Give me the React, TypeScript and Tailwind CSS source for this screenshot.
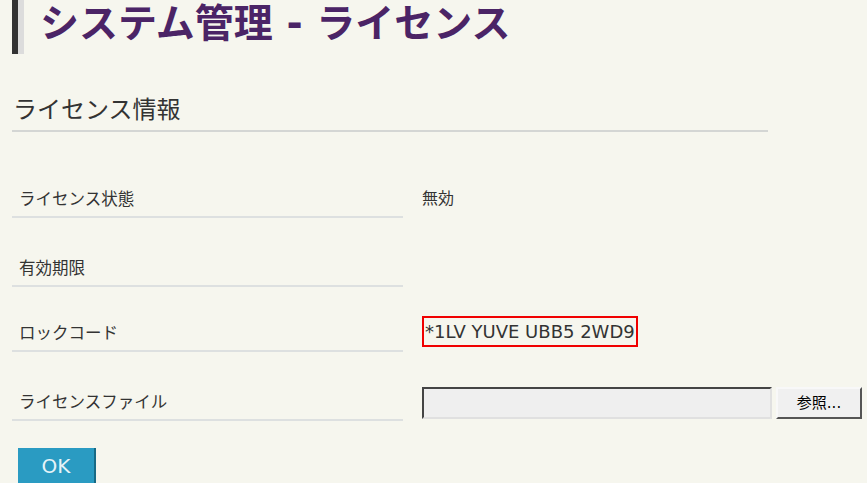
const font = { fontFamily: '"DejaVu Sans", "Noto Sans CJK JP", sans-serif' };

const Row = ({ label, h, children }: any) => (
  <div className={`flex items-end ${h}`}>
    <div className="w-[391px] border-b-2 border-[#dde0e0] pl-[7px] pb-[4px] text-[16.5px] leading-[24px] text-[#333]">
      {label}
    </div>
    <div className="ml-[19px] flex items-end">{children}</div>
  </div>
);

export default function App() {
  return (
    <div className="w-[867px] h-[483px] overflow-hidden bg-[#f6f6ee]" style={font}>
      <div className="flex pl-[12px]">
        <div className="w-[6px] h-[54px] bg-[#333]" />
        <div className="w-[6px] h-[54px] bg-[#dcdcdc]" />
        <div className="ml-[16px] text-[39px] leading-[48px] font-bold text-[#4b2466]">
          システム管理 - ライセンス
        </div>
      </div>

      <div className="mx-[12px] w-[756px] mt-[39px] border-b-2 border-[#d4d6d4] pb-[3px] pl-[1px] text-[24px] leading-[34px] text-[#333]">
        ライセンス情報
      </div>

      <div className="ml-[12px]">
        <Row label="ライセンス状態" h="h-[86px]">
          <div className="pb-[7px] text-[16px] leading-[24px] text-[#333]">無効</div>
        </Row>
        <Row label="有効期限" h="h-[69px]" />
        <Row label="ロックコード" h="h-[65px]">
          <div className="mb-[5px] w-[216px] h-[31px] border-2 border-[#f00000] pl-[1px] text-[18px] leading-[27px] text-[#333] whitespace-nowrap">
            *1LV YUVE UBB5 2WD9
          </div>
        </Row>
        <Row label="ライセンスファイル" h="h-[69px]">
          <div className="mb-[2px] flex gap-[4px]">
            <div className="w-[350px] h-[32px] bg-[#efefef] border-2 border-t-[#444] border-l-[#444] border-r-[#e0e0e0] border-b-[#e0e0e0]" />
            <button className="w-[86px] h-[32px] bg-[#f0f0f0] border-2 border-t-[#f8f8f8] border-l-[#f8f8f8] border-r-[#555] border-b-[#555] text-[15px] text-black">
              参照...
            </button>
          </div>
        </Row>
      </div>

      <button className="ml-[18px] mt-[27px] w-[78px] h-[38px] bg-[#2a9bc2] border-r-2 border-b-2 border-[#176a85] text-[20px] text-[#e6f3f8] leading-[36px]">
        OK
      </button>
    </div>
  );
}
